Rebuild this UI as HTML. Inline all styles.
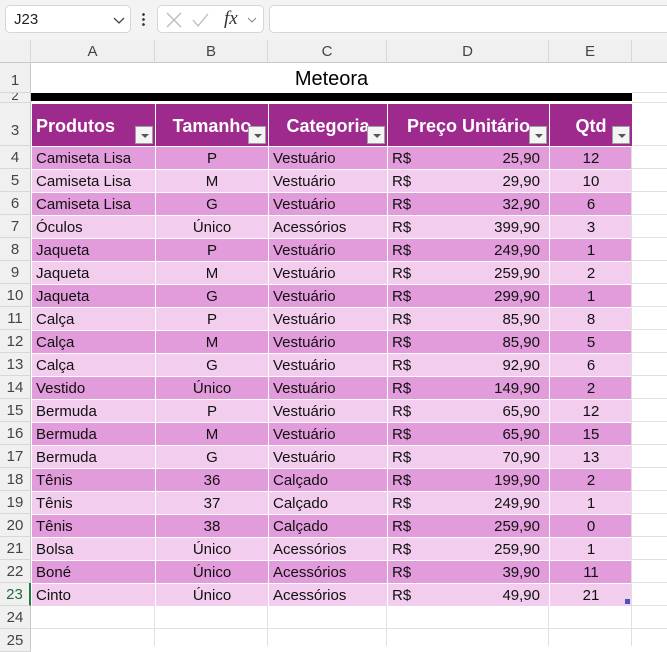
<!DOCTYPE html>
<html><head><meta charset="utf-8"><style>
*{margin:0;padding:0;box-sizing:border-box}
body{width:667px;height:642px;overflow:hidden;background:#fff;font-family:"Liberation Sans",sans-serif;position:relative}
.top{position:absolute;left:0;top:0;width:667px;height:40px;background:#f3f3f3}
.box{position:absolute;top:5px;height:28px;background:#fff;border:1px solid #d6d6d6;border-radius:5px}
.ch{position:absolute;top:40px;height:23px;background:#f0f0f0;border-right:1px solid #d8d8d8;border-bottom:1px solid #c8c8c8;font-size:15px;color:#444;text-align:center;line-height:23px}
.rh{position:absolute;left:0;width:31px;background:#f0f0f0;border-bottom:1px solid #d8d8d8;border-right:1px solid #c8c8c8;font-size:15px;color:#444;text-align:center}
.g{position:absolute;border-right:1px solid #e0e0e0;border-bottom:1px solid #e0e0e0}
table{position:absolute;left:31px;top:103px;border-collapse:collapse;table-layout:fixed}
td{height:23px;border:1px solid #fff;font-size:15px;color:#111;padding:0 4px;white-space:nowrap;overflow:hidden;line-height:21px;vertical-align:bottom}
tr.h td{height:43px;background:#9f2a8e;color:#fff;font-weight:bold;font-size:18px;position:relative;vertical-align:middle;padding-top:2px}
tr.d td{background:#e29bdb}
tr.l td{background:#f2cdee}
.c{text-align:center}.r{text-align:right}
.dd{position:absolute;right:2px;bottom:2px;width:18px;height:18px;background:#f4f4f4;border:1px solid #a0a0a0}
.dd:after{content:"";position:absolute;left:5px;top:7px;border-left:4px solid transparent;border-right:4px solid transparent;border-top:4px solid #555}
</style></head><body>
<div class="top"></div>
<div class="box" style="left:5px;width:126px"><span style="position:absolute;left:8px;top:5px;font-size:15px;color:#222">J23</span><svg style="position:absolute;left:107px;top:10px" width="12" height="8"><path d="M1 2l5 5 5-5" stroke="#444" fill="none" stroke-width="1.3"/></svg></div>
<div style="position:absolute;left:142px;top:12px;width:3px;height:14px;background:radial-gradient(circle,#444 1.3px,transparent 1.5px) 0 0/3px 5px"></div>
<div class="box" style="left:157px;width:107px"><svg style="position:absolute;left:8px;top:6px" width="90" height="16"><path d="M1 1l14 14M15 1L1 15" stroke="#bbb" stroke-width="1.3"/><path d="M27 8l5 6 10-12" stroke="#bbb" stroke-width="1.3" fill="none"/><path d="M90 6l-4 4-4-4" stroke="#888" fill="none"/></svg><span style="position:absolute;left:66px;top:2px;font-family:'Liberation Serif',serif;font-style:italic;font-size:19px;color:#333">fx</span></div>
<div class="box" style="left:269px;width:410px"></div>
<div class="ch" style="left:0;width:31px;background:#f0f0f0"></div>
<div class="ch" style="left:31px;width:124px">A</div>
<div class="ch" style="left:155px;width:113px">B</div>
<div class="ch" style="left:268px;width:119px">C</div>
<div class="ch" style="left:387px;width:162px">D</div>
<div class="ch" style="left:549px;width:83px">E</div>
<div class="ch" style="left:632px;width:40px"></div>
<div style="position:absolute;left:31px;top:63px;width:601px;height:30px;text-align:center;font-size:20px;line-height:32px;color:#000">Meteora</div>
<div style="position:absolute;left:31px;top:93px;width:601px;height:8px;background:#000"></div>
<div class="g" style="left:632px;top:63px;width:40px;height:30px"></div>
<div class="g" style="left:632px;top:93px;width:40px;height:10px"></div>
<div class="g" style="left:632px;top:103px;width:40px;height:43px"></div>
<div class="rh" style="top:63px;height:30px;line-height:36px">1</div>
<div class="rh" style="top:93px;height:10px;line-height:6px;font-size:13px;overflow:hidden">2</div>
<div class="rh" style="top:103px;height:43px;line-height:56px">3</div>
<table>
<colgroup><col style="width:124px"><col style="width:113px"><col style="width:119px"><col style="width:162px"><col style="width:83px"></colgroup>
<tr class="h"><td>Produtos<div class="dd"></div></td><td class="c">Tamanho<div class="dd"></div></td><td class="c">Categoria<div class="dd"></div></td><td class="c">Preço Unitário<div class="dd"></div></td><td class="c">Qtd<div class="dd"></div></td></tr>
<tr class="d"><td>Camiseta Lisa</td><td class="c">P</td><td>Vestuário</td><td>R$<span style="float:right;margin-right:5px">25,90</span></td><td class="c">12</td></tr>
<tr class="l"><td>Camiseta Lisa</td><td class="c">M</td><td>Vestuário</td><td>R$<span style="float:right;margin-right:5px">29,90</span></td><td class="c">10</td></tr>
<tr class="d"><td>Camiseta Lisa</td><td class="c">G</td><td>Vestuário</td><td>R$<span style="float:right;margin-right:5px">32,90</span></td><td class="c">6</td></tr>
<tr class="l"><td>Óculos</td><td class="c">Único</td><td>Acessórios</td><td>R$<span style="float:right;margin-right:5px">399,90</span></td><td class="c">3</td></tr>
<tr class="d"><td>Jaqueta</td><td class="c">P</td><td>Vestuário</td><td>R$<span style="float:right;margin-right:5px">249,90</span></td><td class="c">1</td></tr>
<tr class="l"><td>Jaqueta</td><td class="c">M</td><td>Vestuário</td><td>R$<span style="float:right;margin-right:5px">259,90</span></td><td class="c">2</td></tr>
<tr class="d"><td>Jaqueta</td><td class="c">G</td><td>Vestuário</td><td>R$<span style="float:right;margin-right:5px">299,90</span></td><td class="c">1</td></tr>
<tr class="l"><td>Calça</td><td class="c">P</td><td>Vestuário</td><td>R$<span style="float:right;margin-right:5px">85,90</span></td><td class="c">8</td></tr>
<tr class="d"><td>Calça</td><td class="c">M</td><td>Vestuário</td><td>R$<span style="float:right;margin-right:5px">85,90</span></td><td class="c">5</td></tr>
<tr class="l"><td>Calça</td><td class="c">G</td><td>Vestuário</td><td>R$<span style="float:right;margin-right:5px">92,90</span></td><td class="c">6</td></tr>
<tr class="d"><td>Vestido</td><td class="c">Único</td><td>Vestuário</td><td>R$<span style="float:right;margin-right:5px">149,90</span></td><td class="c">2</td></tr>
<tr class="l"><td>Bermuda</td><td class="c">P</td><td>Vestuário</td><td>R$<span style="float:right;margin-right:5px">65,90</span></td><td class="c">12</td></tr>
<tr class="d"><td>Bermuda</td><td class="c">M</td><td>Vestuário</td><td>R$<span style="float:right;margin-right:5px">65,90</span></td><td class="c">15</td></tr>
<tr class="l"><td>Bermuda</td><td class="c">G</td><td>Vestuário</td><td>R$<span style="float:right;margin-right:5px">70,90</span></td><td class="c">13</td></tr>
<tr class="d"><td>Tênis</td><td class="c">36</td><td>Calçado</td><td>R$<span style="float:right;margin-right:5px">199,90</span></td><td class="c">2</td></tr>
<tr class="l"><td>Tênis</td><td class="c">37</td><td>Calçado</td><td>R$<span style="float:right;margin-right:5px">249,90</span></td><td class="c">1</td></tr>
<tr class="d"><td>Tênis</td><td class="c">38</td><td>Calçado</td><td>R$<span style="float:right;margin-right:5px">259,90</span></td><td class="c">0</td></tr>
<tr class="l"><td>Bolsa</td><td class="c">Único</td><td>Acessórios</td><td>R$<span style="float:right;margin-right:5px">259,90</span></td><td class="c">1</td></tr>
<tr class="d"><td>Boné</td><td class="c">Único</td><td>Acessórios</td><td>R$<span style="float:right;margin-right:5px">39,90</span></td><td class="c">11</td></tr>
<tr class="l"><td>Cinto</td><td class="c">Único</td><td>Acessórios</td><td>R$<span style="float:right;margin-right:5px">49,90</span></td><td class="c">21</td></tr>
</table>
<div style="position:absolute;left:625px;top:599px;width:5px;height:5px;background:#4a55b8"></div>
<div class="rh" style="top:146px;height:23px;line-height:23px">4</div>
<div class="rh" style="top:169px;height:23px;line-height:23px">5</div>
<div class="rh" style="top:192px;height:23px;line-height:23px">6</div>
<div class="rh" style="top:215px;height:23px;line-height:23px">7</div>
<div class="rh" style="top:238px;height:23px;line-height:23px">8</div>
<div class="rh" style="top:261px;height:23px;line-height:23px">9</div>
<div class="rh" style="top:284px;height:23px;line-height:23px">10</div>
<div class="rh" style="top:307px;height:23px;line-height:23px">11</div>
<div class="rh" style="top:330px;height:23px;line-height:23px">12</div>
<div class="rh" style="top:353px;height:23px;line-height:23px">13</div>
<div class="rh" style="top:376px;height:23px;line-height:23px">14</div>
<div class="rh" style="top:399px;height:23px;line-height:23px">15</div>
<div class="rh" style="top:422px;height:23px;line-height:23px">16</div>
<div class="rh" style="top:445px;height:23px;line-height:23px">17</div>
<div class="rh" style="top:468px;height:23px;line-height:23px">18</div>
<div class="rh" style="top:491px;height:23px;line-height:23px">19</div>
<div class="rh" style="top:514px;height:23px;line-height:23px">20</div>
<div class="rh" style="top:537px;height:23px;line-height:23px">21</div>
<div class="rh" style="top:560px;height:23px;line-height:23px">22</div>
<div class="rh" style="top:583px;height:23px;line-height:23px;color:#1e6b3a;border-right:2px solid #1e7b45">23</div>
<div class="rh" style="top:606px;height:23px;line-height:23px">24</div>
<div class="rh" style="top:629px;height:23px;line-height:23px">25</div>
<div style="position:absolute;left:31px;top:606px;width:640px;height:40px;background:linear-gradient(#e0e0e0,#e0e0e0) 0 22px/100% 1px no-repeat"></div>
<div style="position:absolute;left:154px;top:606px;width:1px;height:40px;background:#e0e0e0"></div>
<div style="position:absolute;left:267px;top:606px;width:1px;height:40px;background:#e0e0e0"></div>
<div style="position:absolute;left:386px;top:606px;width:1px;height:40px;background:#e0e0e0"></div>
<div style="position:absolute;left:548px;top:606px;width:1px;height:40px;background:#e0e0e0"></div>
<div style="position:absolute;left:631px;top:146px;width:1px;height:500px;background:#e0e0e0"></div>
<div style="position:absolute;left:632px;top:146px;width:40px;height:500px;background:repeating-linear-gradient(transparent 0,transparent 22px,#e0e0e0 22px,#e0e0e0 23px)"></div>
</body></html>
